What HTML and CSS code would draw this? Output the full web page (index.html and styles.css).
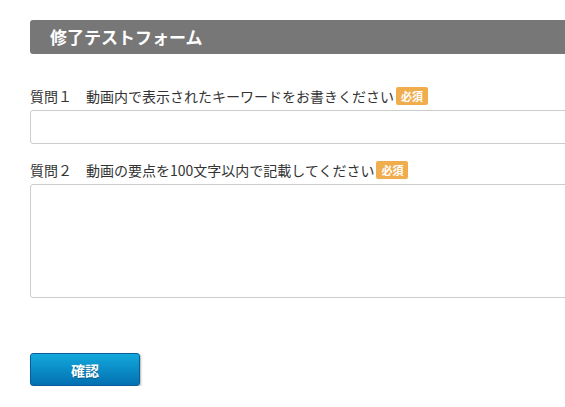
FILE: index.html
```html
<!DOCTYPE html>
<html lang="ja">
<head>
<meta charset="utf-8">
<title>修了テストフォーム</title>
<link rel="stylesheet" href="styles.css">
</head>
<body>
<div class="viewport">
  <div class="page">
    <h1 class="title">修了テストフォーム</h1>
    <form class="form">
      <div class="field">
        <label class="label">質問１　動画内で表示されたキーワードをお書きください<span class="badge">必須</span></label>
        <input class="input" type="text">
      </div>
      <div class="field">
        <label class="label">質問２　動画の要点を100文字以内で記載してください<span class="badge">必須</span></label>
        <textarea class="textarea"></textarea>
      </div>
      <div class="actions">
        <button class="button" type="button">確認</button>
      </div>
    </form>
  </div>
</div>
</body>
</html>
```
FILE: styles.css
```css
html, body {
  margin: 0;
  padding: 0;
  overflow: hidden;
  background: #fff;
}
body {
  font-family: "Noto Sans CJK JP", "Noto Sans", sans-serif;
  color: #333;
}
.viewport {
  width: 100%;
  overflow: hidden;
}
.page {
  width: 600px;
  padding: 20px 0 0 30px;
}
.title {
  margin: 0;
  height: 34px;
  line-height: 34px;
  padding: 0 20px;
  background: #777;
  color: #fff;
  font-size: 17px;
  font-weight: bold;
  border-radius: 3px 0 0 3px;
}
.form {
  margin-top: 33px;
}
.field {
  display: flex;
  flex-direction: column;
  gap: 5px;
  margin-bottom: 17px;
}
.label {
  display: flex;
  align-items: center;
  height: 18px;
  font-size: 14px;
  line-height: 18px;
  color: #333;
  white-space: nowrap;
}
.badge {
  display: inline-block;
  margin-left: 2px;
  height: 18px;
  line-height: 18px;
  padding: 0 5px;
  background: #f0ad4e;
  color: #fff;
  font-size: 11px;
  font-weight: bold;
  border-radius: 2px;
}
.input, .textarea {
  box-sizing: border-box;
  width: 100%;
  border: 1px solid #ccc;
  border-radius: 3px;
  font-family: inherit;
  font-size: 14px;
  background: #fff;
  margin: 0;
}
.input {
  height: 34px;
}
.textarea {
  height: 114px;
  resize: none;
  display: block;
}
.actions {
  margin-top: 55px;
}
.button {
  width: 110px;
  height: 33px;
  border: 1px solid #0b5d9a;
  border-radius: 3px;
  background: linear-gradient(#12a9dc, #0470b2);
  color: #fff;
  font-family: inherit;
  font-size: 14px;
  font-weight: bold;
  text-shadow: 0 1px 1px rgba(0,0,0,0.3);
  box-shadow: 1px 1px 2px rgba(0,0,0,0.3);
  padding: 0;
}
```
